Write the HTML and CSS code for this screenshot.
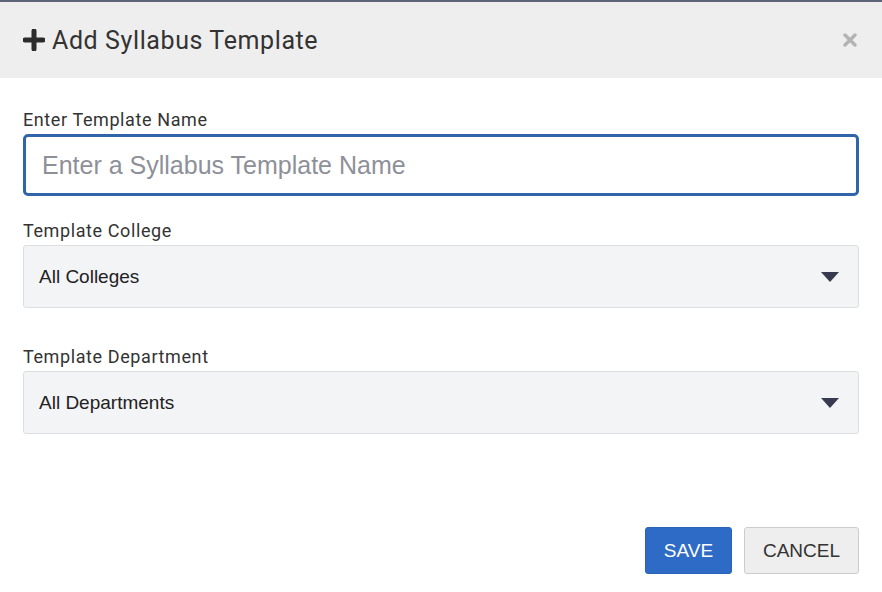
FILE: index.html
```html
<!DOCTYPE html>
<html>
<head>
<meta charset="utf-8">
<link rel="stylesheet" href="styles.css">
</head>
<body>
<div class="modal">
  <div class="modal-header">
    <h1 class="title">
      <svg class="plus" width="22" height="22" viewBox="0 0 22 22"><path d="M11 2v18M2 11h18" stroke="#2b2b2b" stroke-width="5" stroke-linecap="round"/></svg>
      <span>Add Syllabus Template</span>
    </h1>
    <svg class="close" width="14" height="14" viewBox="0 0 14 14"><path d="M2 2l10 10M12 2L2 12" stroke="#b3b3b3" stroke-width="3.4" stroke-linecap="round"/></svg>
  </div>
  <div class="modal-body">
    <div class="field field-name">
      <label class="label">Enter Template Name</label>
      <div class="text-input">Enter a Syllabus Template Name</div>
    </div>
    <div class="field field-college">
      <label class="label">Template College</label>
      <div class="select"><span>All Colleges</span><span class="caret"></span></div>
    </div>
    <div class="field">
      <label class="label">Template Department</label>
      <div class="select"><span>All Departments</span><span class="caret"></span></div>
    </div>
  </div>
  <div class="modal-footer">
    <button class="btn btn-save">SAVE</button>
    <button class="btn btn-cancel">CANCEL</button>
  </div>
</div>
</body>
</html>
```
FILE: styles.css
```css
html, body {
  margin: 0;
  padding: 0;
  background: #ffffff;
}
.modal {
  width: 882px;
  height: 592px;
  border-top: 2px solid #5d6479;
  box-sizing: border-box;
  font-family: Roboto, "Liberation Sans", sans-serif;
  color: #333;
}
.modal-header {
  height: 76px;
  background: #eeeeee;
  display: flex;
  align-items: center;
  justify-content: space-between;
  padding: 0 25px 0 23px;
}
.title {
  margin: 0;
  display: flex;
  align-items: center;
  gap: 7px;
  font-weight: 400;
  font-size: 25px;
  letter-spacing: 0.6px;
  color: #333;
}
.plus { display: block; }
.close { display: block; }
.modal-body {
  padding: 31px 23px 0 23px;
}
.label {
  display: block;
  font-size: 18px;
  letter-spacing: 0.6px;
  line-height: 22px;
  color: #333;
  margin-bottom: 3px;
}
.field-name { margin-bottom: 24px; }
.field-college { margin-bottom: 38px; }
.text-input {
  height: 62px;
  box-sizing: border-box;
  border: 3px solid #3065a9;
  border-radius: 5px;
  padding-left: 16px;
  display: flex;
  align-items: center;
  font-family: "Liberation Sans", Arial, sans-serif;
  font-size: 25px;
  color: #8e9099;
}
.select {
  height: 63px;
  box-sizing: border-box;
  background: #f3f4f6;
  border: 1px solid #dcdee2;
  border-radius: 3px;
  padding: 0 19px 0 15px;
  display: flex;
  align-items: center;
  justify-content: space-between;
  font-family: "Liberation Sans", Arial, sans-serif;
  font-size: 19px;
  color: #222;
}
.caret {
  width: 0;
  height: 0;
  border-left: 9px solid transparent;
  border-right: 9px solid transparent;
  border-top: 10px solid #363b4f;
}
.modal-footer {
  display: flex;
  justify-content: flex-end;
  gap: 12px;
  padding: 93px 23px 0 0;
}
.btn {
  height: 47px;
  box-sizing: border-box;
  border-radius: 3px;
  font-family: "Liberation Sans", Arial, sans-serif;
  font-size: 19px;
  padding: 0;
}
.btn-save {
  width: 87px;
  background: #2e6bc6;
  border: 1px solid #2a63b8;
  color: #fff;
}
.btn-cancel {
  width: 115px;
  background: #eeeeee;
  border: 1px solid #cccccc;
  color: #333;
}
```
